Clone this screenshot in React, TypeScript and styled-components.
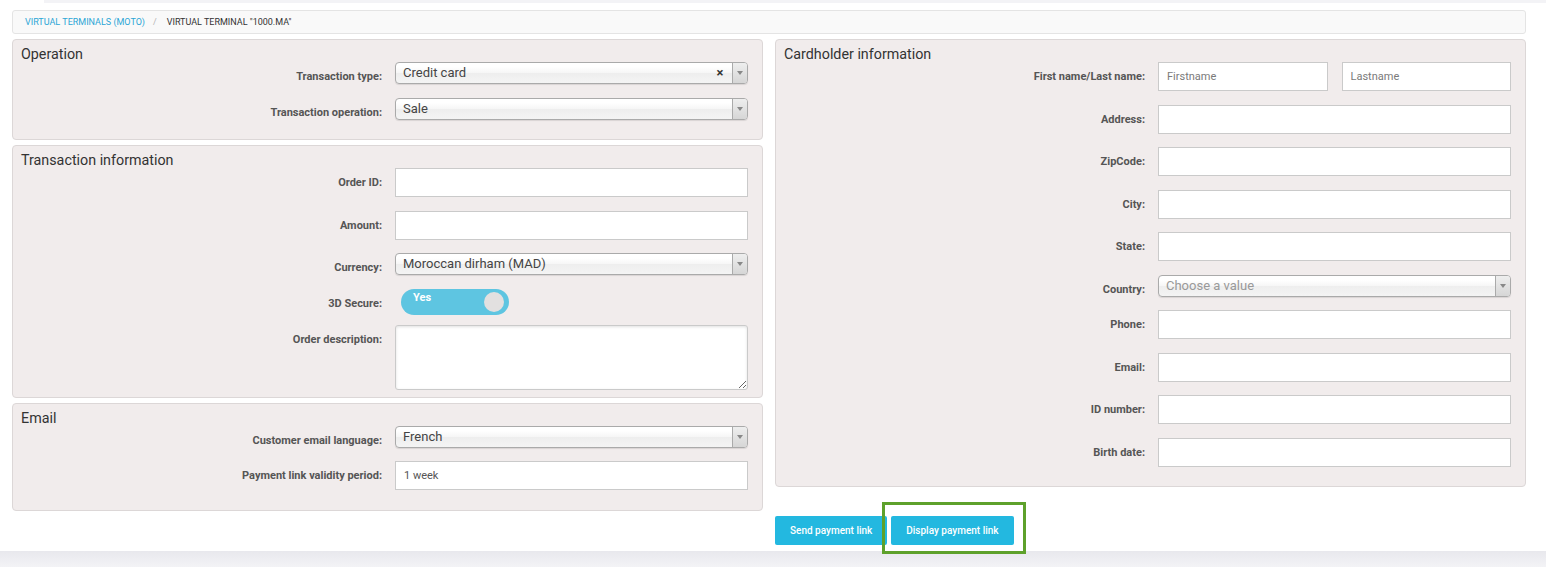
import React from "react";
import styled, { createGlobalStyle } from "styled-components";

const GlobalStyle = createGlobalStyle`
  html, body { margin: 0; padding: 0; background: #fff; }
  body { font-family: Roboto, "Liberation Sans", Arial, sans-serif; color: #333; }
  * { box-sizing: border-box; }
`;

const Page = styled.div`
  min-height: 100vh;
  display: flex;
  flex-direction: column;
`;

const TopStrip = styled.div`
  height: 3px;
  margin-left: 44px;
  background: #f3f3f6;
`;

const Main = styled.main`
  padding: 7px 20px 6px 12px;
`;

const Breadcrumb = styled.nav`
  height: 24px;
  display: flex;
  align-items: center;
  padding-left: 12px;
  background: #f9f9f9;
  border: 1px solid #e4e4e4;
  border-radius: 3px;
  font-size: 9px;
  text-transform: uppercase;
`;

const Crumb = styled.span<{ $active?: boolean }>`
  color: ${(p) => (p.$active ? "#333" : "#2ca6d6")};
`;

const Sep = styled.span`
  color: #b5b5b5;
  margin: 0 10px 0 8px;
`;

const Layout = styled.div`
  display: grid;
  grid-template-columns: 1fr 1fr;
  column-gap: 12px;
  row-gap: 5px;
  margin-top: 5px;
  align-items: start;
`;

const Column = styled.div`
  display: flex;
  flex-direction: column;
  gap: 5px;
`;

const Panel = styled.section`
  background: #f1ecec;
  border: 1px solid #dcd7d7;
  border-radius: 4px;
  padding: 0 14px 6px 8px;
`;

const PanelTitle = styled.h3`
  margin: 0;
  padding-top: 6px;
  height: 22px;
  font-size: 14.3px;
  line-height: 16px;
  font-weight: 400;
  color: #333;
`;

const FormRow = styled.div<{ $space?: number }>`
  display: grid;
  grid-template-columns: 1fr 353px;
  column-gap: 13px;
  margin-bottom: ${(p) => (p.$space ?? 13.5)}px;
`;

const Label = styled.label`
  text-align: right;
  font-size: 11px;
  font-weight: 700;
  line-height: 14px;
  padding-top: 8px;
  color: #555;
`;

const TextInput = styled.input`
  display: block;
  width: 100%;
  height: 29px;
  border: 1px solid #cacaca;
  background: #fff;
  padding: 0 8px;
  font-family: Roboto, "Liberation Sans", Arial, sans-serif;
  font-size: 11px;
  color: #555;
  outline: none;
  &::placeholder { color: #7a7a7a; }
`;

const NamePair = styled.div`
  display: grid;
  grid-template-columns: 1fr 1fr;
  column-gap: 14px;
`;

const TextArea = styled.textarea`
  display: block;
  width: 100%;
  height: 65px;
  border: 1px solid #cacaca;
  border-radius: 3px;
  background: #fff;
  box-shadow: inset 0 1px 3px rgba(0, 0, 0, 0.12);
  resize: vertical;
  outline: none;
`;

const SelectBox = styled.div`
  height: 22px;
  display: flex;
  align-items: stretch;
  border: 1px solid #aaa;
  border-radius: 4px;
  background: linear-gradient(#fff 20%, #f6f6f6 50%, #eee 52%, #f4f4f4 100%);
  box-shadow: 0 1px 1px rgba(0, 0, 0, 0.1);
  overflow: hidden;
`;

const SelectText = styled.span<{ $placeholder?: boolean }>`
  flex: 1;
  padding-left: 7px;
  font-size: 13px;
  line-height: 20px;
  color: ${(p) => (p.$placeholder ? "#999" : "#444")};
`;

const ClearX = styled.span`
  width: 16px;
  font-size: 13px;
  font-weight: 700;
  line-height: 20px;
  color: #333;
  text-align: center;
  margin-right: 4px;
`;

const ArrowBox = styled.span`
  width: 15px;
  border-left: 1px solid #aaa;
  background: linear-gradient(#eee, #d6d6d6);
  display: flex;
  justify-content: center;
  padding-top: 8px;
  &::after {
    content: "";
    width: 0;
    height: 0;
    border-left: 3px solid transparent;
    border-right: 3px solid transparent;
    border-top: 4px solid #888;
  }
`;

const Toggle = styled.div`
  position: relative;
  width: 108px;
  height: 26px;
  margin-left: 6px;
  border-radius: 13px;
  background: #5ec5e1;
`;

const ToggleText = styled.span`
  position: absolute;
  left: 12px;
  top: 2px;
  font-size: 11px;
  font-weight: 700;
  color: #fff;
`;

const Knob = styled.span`
  position: absolute;
  right: 5px;
  top: 3px;
  width: 20px;
  height: 20px;
  border-radius: 50%;
  background: #e2e0e0;
`;

const Actions = styled.div`
  grid-column: 2;
  display: flex;
  gap: 4px;
`;

const Button = styled.button`
  height: 29px;
  padding: 0 15px;
  border: none;
  border-radius: 2px;
  background: #23b8e0;
  color: #fff;
  font-family: Roboto, "Liberation Sans", Arial, sans-serif;
  font-size: 10px;
  font-weight: 500;
  cursor: pointer;
`;

const Highlighted = styled.span`
  position: relative;
  display: inline-flex;
`;

const HighlightBox = styled.span`
  position: absolute;
  top: -14px;
  left: -9px;
  right: -12px;
  bottom: -9px;
  border: 3px solid #5ea12b;
  pointer-events: none;
`;

const Footer = styled.footer`
  flex: 1;
  min-height: 16px;
  background: linear-gradient(#e8e8ed, #f3f3f6);
`;

function Select({ value, placeholder, clearable }: { value?: string; placeholder?: string; clearable?: boolean }) {
  return (
    <SelectBox>
      <SelectText $placeholder={!value}>{value ?? placeholder}</SelectText>
      {clearable && <ClearX>×</ClearX>}
      <ArrowBox />
    </SelectBox>
  );
}

function Field({ label, children, space }: { label: string; children: React.ReactNode; space?: number }) {
  return (
    <FormRow $space={space}>
      <Label>{label}</Label>
      <div>{children}</div>
    </FormRow>
  );
}

export default function App() {
  return (
    <Page>
      <GlobalStyle />
      <TopStrip />
      <Main>
        <Breadcrumb>
          <Crumb>Virtual terminals (MOTO)</Crumb>
          <Sep>/</Sep>
          <Crumb $active>Virtual terminal "1000.MA"</Crumb>
        </Breadcrumb>
        <Layout>
          <Column>
            <Panel>
              <PanelTitle>Operation</PanelTitle>
              <Field label="Transaction type:">
                <Select value="Credit card" clearable />
              </Field>
              <Field label="Transaction operation:">
                <Select value="Sale" />
              </Field>
            </Panel>
            <Panel>
              <PanelTitle>Transaction information</PanelTitle>
              <Field label="Order ID:">
                <TextInput />
              </Field>
              <Field label="Amount:">
                <TextInput />
              </Field>
              <Field label="Currency:">
                <Select value="Moroccan dirham (MAD)" />
              </Field>
              <Field label="3D Secure:" space={10}>
                <Toggle>
                  <ToggleText>Yes</ToggleText>
                  <Knob />
                </Toggle>
              </Field>
              <Field label="Order description:" space={1}>
                <TextArea />
              </Field>
            </Panel>
            <Panel>
              <PanelTitle>Email</PanelTitle>
              <Field label="Customer email language:">
                <Select value="French" />
              </Field>
              <Field label="Payment link validity period:">
                <TextInput defaultValue="1 week" />
              </Field>
            </Panel>
          </Column>
          <Panel>
            <PanelTitle>Cardholder information</PanelTitle>
            <Field label="First name/Last name:">
              <NamePair>
                <TextInput placeholder="Firstname" />
                <TextInput placeholder="Lastname" />
              </NamePair>
            </Field>
            <Field label="Address:">
              <TextInput />
            </Field>
            <Field label="ZipCode:">
              <TextInput />
            </Field>
            <Field label="City:">
              <TextInput />
            </Field>
            <Field label="State:">
              <TextInput />
            </Field>
            <Field label="Country:">
              <Select placeholder="Choose a value" />
            </Field>
            <Field label="Phone:">
              <TextInput />
            </Field>
            <Field label="Email:">
              <TextInput />
            </Field>
            <Field label="ID number:">
              <TextInput />
            </Field>
            <Field label="Birth date:">
              <TextInput />
            </Field>
          </Panel>
          <Actions>
            <Button>Send payment link</Button>
            <Highlighted>
              <Button>Display payment link</Button>
              <HighlightBox />
            </Highlighted>
          </Actions>
        </Layout>
      </Main>
      <Footer />
    </Page>
  );
}
